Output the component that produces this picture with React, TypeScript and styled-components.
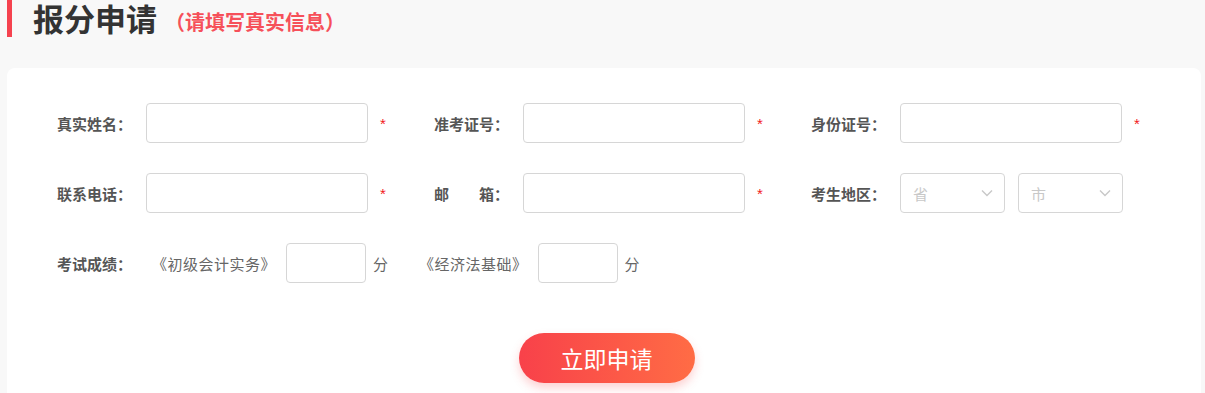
import styled, { createGlobalStyle } from "styled-components";

const GlobalStyle = createGlobalStyle`
  body {
    margin: 0;
    background: #f8f8f8;
    font-family: "Noto Sans CJK SC", "Microsoft YaHei", sans-serif;
  }
  * { box-sizing: border-box; }
`;

const Page = styled.div`
  padding: 0 4px 0 7px;
  height: 393px;
  overflow: hidden;
`;

const Header = styled.div`
  display: flex;
  align-items: center;
  height: 37px;
  border-left: 5px solid #f5424f;
  padding-left: 21px;
`;

const Title = styled.h1`
  margin: 0;
  font-size: 31px;
  font-weight: 700;
  color: #333;
  line-height: 1.1;
`;

const SubTitle = styled.span`
  margin-left: 8px;
  margin-top: 6px;
  font-size: 20px;
  font-weight: 700;
  color: #f6505a;
`;

const Card = styled.div`
  margin-top: 31px;
  background: #fff;
  border-radius: 8px;
  padding: 35px 45px 30px 50px;
  min-height: 340px;
`;

const Row = styled.div`
  display: flex;
  align-items: center;
  height: 40px;
  margin-bottom: 30px;
`;

const Field = styled.div`
  display: flex;
  align-items: center;
  flex: 0 0 377px;
`;

const Label = styled.label<{ $w?: number }>`
  flex: 0 0 ${(p) => p.$w ?? 89}px;
  font-size: 15px;
  font-weight: 700;
  color: #555;
  white-space: pre;
`;

const TextInput = styled.input<{ $w?: number }>`
  flex: 0 0 ${(p) => p.$w ?? 222}px;
  width: ${(p) => p.$w ?? 222}px;
  height: 40px;
  border: 1px solid #d6d6d6;
  border-radius: 4px;
  outline: none;
  padding: 0 10px;
  font-size: 14px;
`;

const Star = styled.span`
  margin-left: 12px;
  color: #f21a1a;
  font-size: 15px;
  font-family: "Liberation Sans", sans-serif;
`;

const Select = styled.div`
  flex: 0 0 105px;
  height: 40px;
  border: 1px solid #d6d6d6;
  border-radius: 4px;
  display: flex;
  align-items: center;
  justify-content: space-between;
  padding: 0 10px 0 12px;
  color: #c8c8c8;
  font-size: 15px;
  & + & {
    margin-left: 13px;
  }
`;

const Book = styled.span<{ $ml?: number }>`
  margin-left: ${(p) => p.$ml ?? 0}px;
  margin-right: 10px;
  font-size: 15px;
  letter-spacing: 0.5px;
  color: #666;
  white-space: nowrap;
`;

const Unit = styled.span`
  margin-left: 7px;
  font-size: 15px;
  color: #666;
`;

const Actions = styled.div`
  display: flex;
  justify-content: center;
  margin-top: 50px;
`;

const Submit = styled.button`
  width: 176px;
  height: 50px;
  border: 0;
  border-radius: 25px;
  background: linear-gradient(90deg, #f8414a, #ff6c45);
  box-shadow: 0 5px 10px rgba(249, 76, 80, 0.25);
  color: #fff;
  font-size: 23px;
  font-family: inherit;
  cursor: pointer;
`;

const Chevron = () => (
  <svg width="14" height="14" viewBox="0 0 14 14" fill="none">
    <path d="M2 4.5 7 9.5 12 4.5" stroke="#c8c8c8" strokeWidth="1.4" />
  </svg>
);

export default function App() {
  return (
    <>
      <GlobalStyle />
      <Page>
        <Header>
          <Title>报分申请</Title>
          <SubTitle>（请填写真实信息）</SubTitle>
        </Header>
        <Card>
          <Row>
            <Field>
              <Label>真实姓名：</Label>
              <TextInput />
              <Star>*</Star>
            </Field>
            <Field>
              <Label>准考证号：</Label>
              <TextInput />
              <Star>*</Star>
            </Field>
            <Field>
              <Label>身份证号：</Label>
              <TextInput />
              <Star>*</Star>
            </Field>
          </Row>
          <Row>
            <Field>
              <Label>联系电话：</Label>
              <TextInput />
              <Star>*</Star>
            </Field>
            <Field>
              <Label>邮　　箱：</Label>
              <TextInput />
              <Star>*</Star>
            </Field>
            <Field>
              <Label>考生地区：</Label>
              <Select>
                省<Chevron />
              </Select>
              <Select>
                市<Chevron />
              </Select>
            </Field>
          </Row>
          <Row>
            <Label $w={95}>考试成绩：</Label>
            <Book>《初级会计实务》</Book>
            <TextInput $w={80} />
            <Unit>分</Unit>
            <Book $ml={31}>《经济法基础》</Book>
            <TextInput $w={80} />
            <Unit>分</Unit>
          </Row>
          <Actions>
            <Submit>立即申请</Submit>
          </Actions>
        </Card>
      </Page>
    </>
  );
}
